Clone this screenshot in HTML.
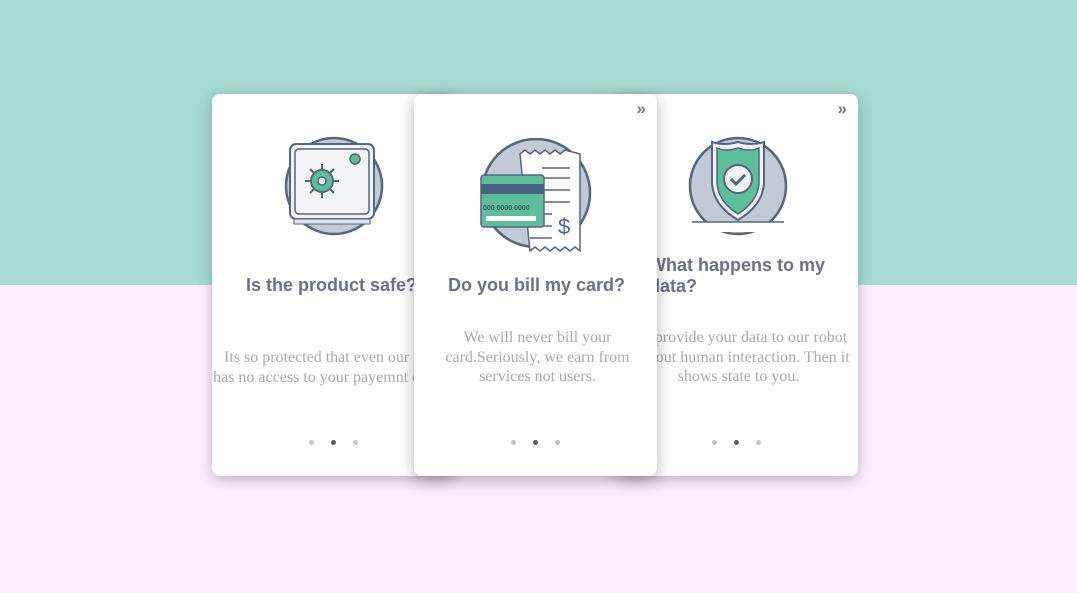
<!DOCTYPE html>
<html><head><style>
body{margin:0;width:1077px;height:593px;background:#fdeefe;position:relative;overflow:hidden;font-family:"Liberation Sans",sans-serif}
.top{position:absolute;left:0;top:0;width:1077px;height:285px;background:#a6dbd0}
.card{position:absolute;top:94px;width:243px;height:382px;background:#fff;border-radius:8px;box-shadow:0 4px 14px rgba(0,0,0,.25);overflow:hidden}
.icon{position:absolute;left:71px;top:40px;width:104px;height:104px}
.t{position:absolute;left:34px;width:220px;text-align:left;font-weight:bold;font-size:18px;color:#6b7189;line-height:21px;white-space:nowrap}
.b{position:absolute;left:-8px;width:263px;text-align:center;font-family:"Liberation Serif",serif;font-size:16px;color:#a9a9a9;line-height:19.5px;white-space:nowrap}
.dots{position:absolute;top:346px;left:0;width:100%;text-align:center;font-size:0}
.dots span{display:inline-block;width:5px;height:5px;border-radius:50%;background:#bcc6d3;margin:0 8.5px}
.dots span.a{background:#4e5f78}
.nx{position:absolute;right:11px;top:5px;font-size:17px;font-weight:bold;color:#777}
</style></head><body>
<div class="top"></div>

<div class="card" style="left:212px;z-index:1">
<svg class="icon" viewBox="0 0 104 104" style="top:40px;left:70px">
<circle cx="52" cy="52" r="48" fill="#c2cad5" stroke="#55667e" stroke-width="2.5"/>
<rect x="8" y="10" width="84" height="75" rx="6" fill="#eef1f5" stroke="#55667e" stroke-width="2"/>
<rect x="13" y="15" width="74" height="65" rx="4" fill="#f4f5f8" stroke="#55667e" stroke-width="1.5"/>
<rect x="12" y="85" width="76" height="5" fill="#dfe4ea" stroke="#55667e" stroke-width="1"/>
<circle cx="40" cy="47" r="11" fill="#5cbf9a" stroke="#55667e" stroke-width="2"/>
<circle cx="40" cy="47" r="4" fill="#eef1f5" stroke="#55667e" stroke-width="1.5"/>
<g stroke="#55667e" stroke-width="2"><line x1="40" y1="30" x2="40" y2="36"/><line x1="40" y1="58" x2="40" y2="64"/><line x1="23" y1="47" x2="29" y2="47"/><line x1="51" y1="47" x2="57" y2="47"/><line x1="28" y1="35" x2="32" y2="39"/><line x1="48" y1="55" x2="52" y2="59"/><line x1="52" y1="35" x2="48" y2="39"/><line x1="32" y1="55" x2="28" y2="59"/></g>
<circle cx="73" cy="25" r="5" fill="#5cbf9a" stroke="#55667e" stroke-width="1.5"/>
</svg>
<div class="t" style="top:181px">Is the product safe?</div>
<div class="b" style="top:254px">Its so protected that even our robot<br>has no access to your payemnt details.</div>
<div class="dots"><span></span><span class="a"></span><span></span></div>
</div>

<div class="card" style="left:615px;z-index:1">
<div class="nx">»</div>
<svg class="icon" viewBox="0 0 104 104" style="top:40px;left:71px">
<circle cx="52" cy="52" r="48" fill="#c2cad5" stroke="#55667e" stroke-width="2.5"/>
<rect x="6" y="88" width="92" height="10" fill="#fff"/>
<line x1="6" y1="88" x2="98" y2="88" stroke="#55667e" stroke-width="1.5"/>
<path d="M52 8 Q38 12 26 8 L26 50 Q28 72 52 86 Q76 72 78 50 L78 8 Q66 12 52 8Z" fill="#eef1f5" stroke="#55667e" stroke-width="2"/>
<path d="M52 14 Q40 18 31 14 L31 50 Q33 68 52 80 Q71 68 73 50 L73 14 Q64 18 52 14Z" fill="#5cbf9a" stroke="#55667e" stroke-width="1.5"/>
<circle cx="52" cy="45" r="14" fill="#eef1f5" stroke="#55667e" stroke-width="2"/>
<path d="M45 45 L50 50 L59 41" fill="none" stroke="#55667e" stroke-width="3"/>
</svg>
<div class="t" style="top:161px">What happens to my<br>data?</div>
<div class="b" style="top:234px">We provide your data to our robot<br>without human interaction. Then it<br>shows state to you.</div>
<div class="dots"><span></span><span class="a"></span><span></span></div>
</div>

<div class="card" style="left:414px;z-index:2;box-shadow:0 4px 16px rgba(0,0,0,.3)">
<div class="nx">»</div>
<svg class="icon" viewBox="0 0 120 120" style="top:44px;left:66px;width:120px;height:120px">
<circle cx="56" cy="55" r="54" fill="#c2cad5" stroke="#55667e" stroke-width="2.5"/>
<path d="M40 16 l5 -4 5 4 5 -4 5 4 5 -4 5 4 5 -4 5 4 5 -4 L100 16 L100 113 l-5 -4 -5 4 -5 -4 -5 4 -5 -4 -5 4 -5 -4 -5 4 -5 -4 -5 4Z" fill="#fff" stroke="#55667e" stroke-width="1.5"/>
<g stroke="#55667e" stroke-width="1.5"><line x1="62" y1="30" x2="90" y2="30"/><line x1="62" y1="40" x2="90" y2="40"/><line x1="62" y1="52" x2="90" y2="52"/><line x1="62" y1="64" x2="90" y2="64"/><line x1="58" y1="76" x2="72" y2="76"/><line x1="58" y1="88" x2="72" y2="88"/><line x1="50" y1="100" x2="72" y2="100"/></g>
<text x="78" y="96" font-family="Liberation Sans" font-size="22" fill="#55667e">$</text>
<rect x="1" y="37" width="63" height="52" rx="3" fill="#5cbf9a" stroke="#55667e" stroke-width="1.5"/>
<rect x="1" y="46" width="63" height="10" fill="#4a6385"/>
<text x="3" y="72" font-family="Liberation Sans" font-size="7" font-weight="bold" fill="#3b5070">000 0000 0000</text>
<rect x="6" y="78" width="50" height="5" fill="#fff"/>
</svg>
<div class="t" style="top:181px">Do you bill my card?</div>
<div class="b" style="top:234px">We will never bill your<br>card.Seriously, we earn from<br>services not users.</div>
<div class="dots"><span></span><span class="a"></span><span></span></div>
</div>
</body></html>
